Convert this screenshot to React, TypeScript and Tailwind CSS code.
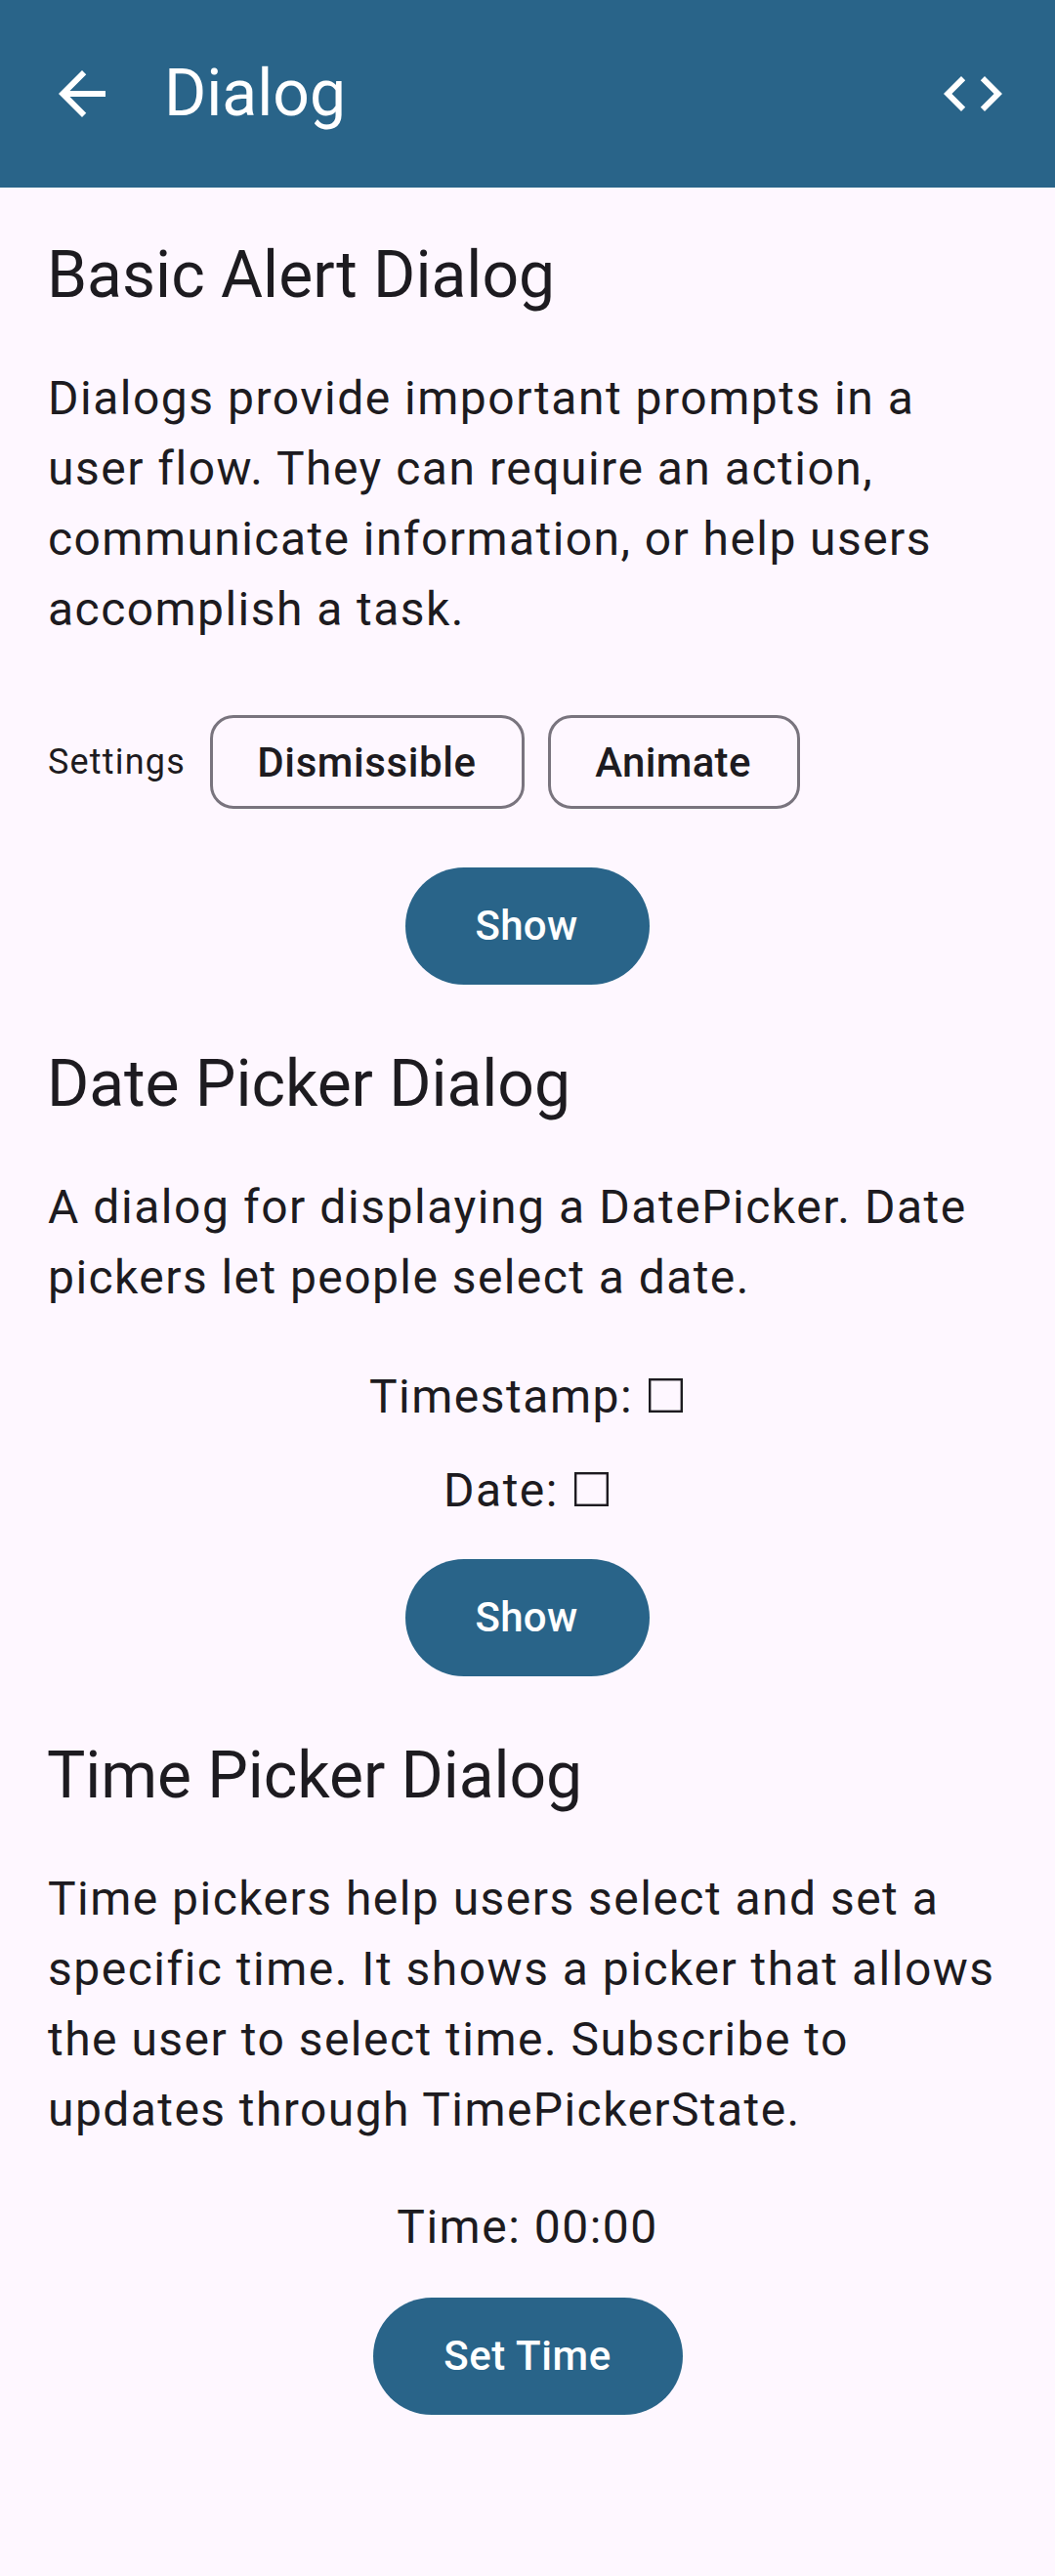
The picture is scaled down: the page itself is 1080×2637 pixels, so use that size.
import React from 'react';

function Heading({ children, tracking = '' }: { children: React.ReactNode; tracking?: string }) {
  return <h2 className={`h-[108px] text-[66px] leading-[108px] whitespace-nowrap ${tracking}`}>{children}</h2>;
}

type Line = { text: string; tracking?: string };

function Body({ lines }: { lines: Line[] }) {
  return (
    <p className="mt-9 pl-px text-[48px] leading-[72px] whitespace-nowrap">
      {lines.map(({ text, tracking = 'tracking-[1.5px]' }) => (
        <span key={text} className={`block ${tracking}`}>{text}</span>
      ))}
    </p>
  );
}

function FilledButton({ children, className }: { children: React.ReactNode; className: string }) {
  return (
    <button className={`mx-auto block h-[120px] rounded-full bg-[#296489] text-[42px] font-medium leading-[120px] text-white ${className}`}>
      {children}
    </button>
  );
}

function Chip({ children, className }: { children: React.ReactNode; className: string }) {
  return (
    <button className={`flex h-24 items-center justify-center rounded-[24px] border-[3px] border-[#79747e] text-[42px] font-medium ${className}`}>
      {children}
    </button>
  );
}

function Value({ label, className }: { label: string; className: string }) {
  return (
    <div className={`flex h-[72px] items-center justify-center text-[48px] leading-[72px] tracking-[1.5px] ${className}`}>
      {label}
      <svg className="mr-[3px] mb-[3px] ml-4 size-[35px]" viewBox="0 0 35 35" fill="none" stroke="currentColor" strokeWidth="2.4">
        <rect x="1.2" y="1.2" width="32.6" height="32.6" />
      </svg>
    </div>
  );
}

export default function App() {
  return (
    <div className="h-[2637px] w-[1080px] overflow-hidden bg-[#fef7ff] font-['Roboto',sans-serif] text-[#1d1b20]">
      <header className="flex h-[192px] items-center bg-[#296489] px-12 text-white">
        <svg className="size-[72px]" viewBox="0 0 24 24" fill="currentColor">
          <path d="M20 11H7.83l5.59-5.59L12 4l-8 8 8 8 1.41-1.41L7.83 13H20v-2z" />
        </svg>
        <h1 className="ml-12 grow text-[66px] leading-[84px]">Dialog</h1>
        <svg className="size-[72px]" viewBox="0 0 24 24" fill="currentColor">
          <path d="M9.4 16.6L4.8 12l4.6-4.6L8 6l-6 6 6 6 1.4-1.4zm5.2 0l4.6-4.6-4.6-4.6L16 6l6 6-6 6-1.4-1.4z" />
        </svg>
      </header>
      <main className="flex flex-col gap-12 px-12 pt-9">
        <section>
          <Heading>Basic Alert Dialog</Heading>
          <Body
            lines={[
              { text: 'Dialogs provide important prompts in a' },
              { text: 'user flow. They can require an action,' },
              { text: 'communicate information, or help users', tracking: 'tracking-[1.43px]' },
              { text: 'accomplish a task.', tracking: 'tracking-[1.45px]' },
            ]}
          />
          <div className="mt-[72px] mb-[60px] flex h-24 items-center">
            <span className="w-[167px] pl-px text-[36px] tracking-[1.2px] whitespace-nowrap">Settings</span>
            <Chip className="w-[322px] pr-px tracking-[0.6px]">Dismissible</Chip>
            <Chip className="ml-6 w-[258px] pr-0.5 tracking-[0.3px]">Animate</Chip>
          </div>
          <FilledButton className="w-[250px] pr-0.5 tracking-[0.3px]">Show</FilledButton>
        </section>
        <section>
          <Heading tracking="tracking-[-0.06px]">Date Picker Dialog</Heading>
          <Body
            lines={[
              { text: 'A dialog for displaying a DatePicker. Date', tracking: 'tracking-[1.55px]' },
              { text: 'pickers let people select a date.', tracking: 'tracking-[1.43px]' },
            ]}
          />
          <Value label="Timestamp:" className="mt-[50px]" />
          <Value label="Date:" className="mt-6 mb-[34px]" />
          <FilledButton className="w-[250px] pr-0.5 tracking-[0.3px]">Show</FilledButton>
        </section>
        <section>
          <Heading tracking="tracking-[-0.08px]">Time Picker Dialog</Heading>
          <Body
            lines={[
              { text: 'Time pickers help users select and set a', tracking: 'tracking-[1.47px]' },
              { text: 'specific time. It shows a picker that allows' },
              { text: 'the user to select time. Subscribe to', tracking: 'tracking-[1.48px]' },
              { text: 'updates through TimePickerState.', tracking: 'tracking-[1.42px]' },
            ]}
          />
          <div className="mt-12 mb-9 text-center text-[48px] leading-[72px] tracking-[1.5px]">Time: 00:00</div>
          <FilledButton className="w-[317px] tracking-[0.6px]">Set Time</FilledButton>
        </section>
      </main>
    </div>
  );
}
